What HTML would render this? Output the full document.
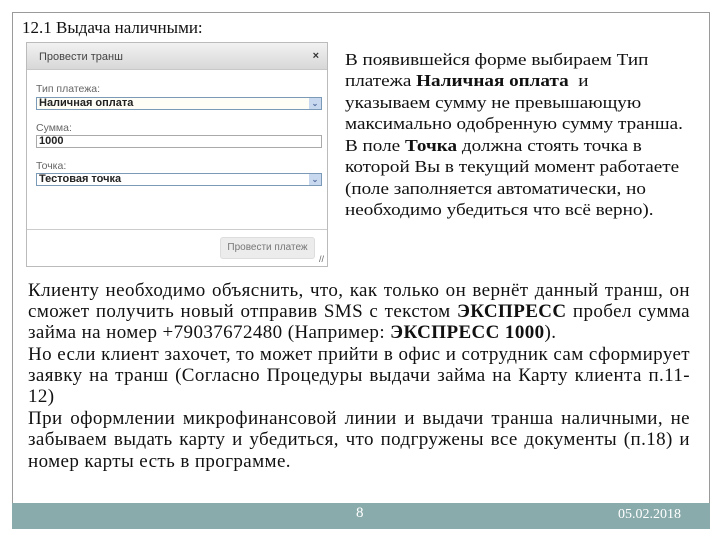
<!DOCTYPE html>
<html><head><meta charset="utf-8"><style>
*{margin:0;padding:0;box-sizing:border-box}
body{width:720px;height:540px;background:#fff;position:relative;overflow:hidden;font-family:"Liberation Serif","Noto Serif CJK SC",serif;color:#111}
.frame{position:absolute;left:12px;top:12px;width:698px;height:517px;border:1px solid #9a9a9a}
.foot{position:absolute;left:12px;top:503px;width:698px;height:26px;background:#8aabab}
.ab{position:absolute;white-space:nowrap}
.r{left:345px;font-size:16.5px;transform:scaleX(1.16);transform-origin:0 0}
.b{left:28px;width:662px;font-size:19px;text-align:justify;text-align-last:justify;letter-spacing:0.4px}
.dlg{position:absolute;left:26px;top:42px;width:302px;height:225px;border:1px solid #bbb;background:#fff;font-family:"Liberation Sans",sans-serif}
.hdr{height:27px;background:linear-gradient(#f2f2f2,#d8d8d8);border-bottom:1px solid #c8c8c8;font-size:11px;color:#444;padding:8px 0 0 12px;position:relative}
.lbl{position:absolute;left:9px;font-size:10.5px;color:#666}
.fld{position:absolute;left:9px;width:286px;height:13px;border:1px solid #7a9ab8;font-size:11px;font-weight:bold;color:#222;padding-left:2px;line-height:11px}
.arr{position:absolute;right:0;top:0;width:12px;height:11px;background:#c8d8ee;font-size:8px;color:#5570a0;text-align:center}
</style></head><body>
<div class="frame"></div>
<div class="foot"></div>
<div class="ab" style="left:22px;top:18px;font-size:17px">12.1 Выдача наличными:</div>
<div class="dlg">
 <div class="hdr">Провести транш<span style="position:absolute;right:8px;top:7px;font-weight:bold;color:#333">×</span></div>
 <div class="lbl" style="top:40px">Тип платежа:</div>
 <div class="fld" style="top:54px;background:#fffef6">Наличная оплата<span class="arr">⌄</span></div>
 <div class="lbl" style="top:79px">Сумма:</div>
 <div class="fld" style="top:92px;border-color:#aaa">1000</div>
 <div class="lbl" style="top:117px">Точка:</div>
 <div class="fld" style="top:130px">Тестовая точка<span class="arr">⌄</span></div>
 <div style="position:absolute;left:0;top:186px;width:300px;border-top:1px solid #ccc"></div>
 <div style="position:absolute;left:193px;top:194px;width:95px;height:22px;background:#ececec;border:1px solid #ddd;border-radius:3px;font-size:10px;color:#777;text-align:center;line-height:20px">Провести платеж</div>
 <div style="position:absolute;right:3px;bottom:2px;font-size:9px;color:#666">//</div>
</div>
<div class="ab r" style="top:50px">В появившейся форме выбираем Тип</div>
<div class="ab r" style="top:71px">платежа <b>Наличная оплата</b>&nbsp; и</div>
<div class="ab r" style="top:93px">указываем сумму не превышающую</div>
<div class="ab r" style="top:114px">максимально одобренную сумму транша.</div>
<div class="ab r" style="top:136px">В поле <b>Точка</b> должна стоять точка в</div>
<div class="ab r" style="top:157px">которой Вы в текущий момент работаете</div>
<div class="ab r" style="top:179px">(поле заполняется автоматически, но</div>
<div class="ab r" style="top:200px">необходимо убедиться что всё верно).</div>
<div class="ab b" style="top:280px">Клиенту необходимо объяснить, что, как только он вернёт данный транш, он</div>
<div class="ab b" style="top:301px">сможет получить новый отправив SMS с текстом <b>ЭКСПРЕСС</b> пробел сумма</div>
<div class="ab b" style="top:322px;text-align-last:left">займа на номер +79037672480 (Например: <b>ЭКСПРЕСС 1000</b>).</div>
<div class="ab b" style="top:344px">Но если клиент захочет, то может прийти в офис и сотрудник сам сформирует</div>
<div class="ab b" style="top:365px">заявку на транш (Согласно Процедуры выдачи займа на Карту клиента п.11-</div>
<div class="ab b" style="top:386px;text-align-last:left">12)</div>
<div class="ab b" style="top:408px">При оформлении микрофинансовой линии и выдачи транша наличными, не</div>
<div class="ab b" style="top:429px">забываем выдать карту и убедиться, что подгружены все документы (п.18) и</div>
<div class="ab b" style="top:451px;text-align-last:left">номер карты есть в программе.</div>
<div class="ab" style="left:356px;top:505px;font-size:15px;color:#fff">8</div>
<div class="ab" style="left:618px;top:507px;font-size:14px;color:#fff">05.02.2018</div>
</body></html>
